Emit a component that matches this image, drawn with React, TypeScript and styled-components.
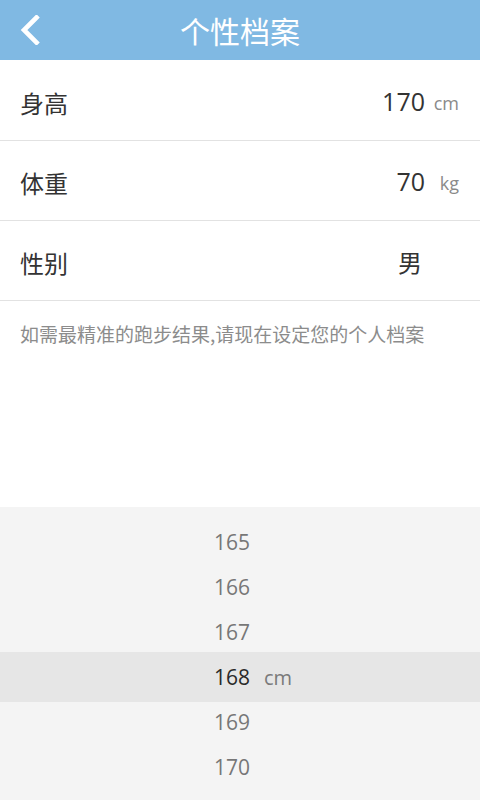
import React from "react";
import styled, { createGlobalStyle } from "styled-components";

const GlobalStyle = createGlobalStyle`
  html, body { margin: 0; padding: 0; background: #ffffff; }
  body { font-family: "Open Sans", "Noto Sans CJK SC", sans-serif; }
  * { box-sizing: border-box; }
`;

const CJK = `"Noto Sans CJK SC", "Open Sans", sans-serif`;
const LATIN = `"Open Sans", "Noto Sans CJK SC", sans-serif`;

const Page = styled.div`
  width: 480px;
  height: 800px;
  display: flex;
  flex-direction: column;
  background: #ffffff;
  overflow: hidden;
`;

const Header = styled.header`
  height: 60px;
  flex-shrink: 0;
  background: #80b9e3;
  display: grid;
  grid-template-columns: 60px 1fr 60px;
  align-items: center;
`;

const BackButton = styled.button`
  width: 60px;
  height: 60px;
  border: 0;
  padding: 0 0 0 20px;
  background: transparent;
  display: flex;
  align-items: center;
  justify-content: flex-start;
  svg { display: block; }
`;

const Title = styled.h1`
  margin: 0;
  text-align: center;
  color: #ffffff;
  font-family: ${CJK};
  font-weight: 400;
  font-size: 30px;
  line-height: 60px;
`;

const List = styled.div`
  padding-top: 1px;
`;

const Row = styled.div`
  height: 80px;
  padding: 0 21px 0 20px;
  border-bottom: 1px solid #e2e2e2;
  display: grid;
  grid-template-columns: 1fr auto 34px;
  align-items: center;
`;

const Label = styled.span`
  font-family: ${CJK};
  font-size: 24px;
  color: #333333;
  padding-top: 4px;
`;

const Value = styled.span<{ $cjk?: boolean }>`
  font-family: ${(p) => (p.$cjk ? CJK : LATIN)};
  font-size: ${(p) => (p.$cjk ? "24px" : "25px")};
  color: #333333;
  text-align: right;
  padding-right: ${(p) => (p.$cjk ? "3px" : "0")};
  padding-top: ${(p) => (p.$cjk ? "2px" : "0")};
`;

const Unit = styled.span`
  font-family: ${LATIN};
  font-size: 18px;
  color: #8a8a8a;
  text-align: right;
  padding-top: 4px;
`;

const Hint = styled.p`
  margin: 0;
  padding: 20px 20px 0;
  font-family: ${CJK};
  font-size: 19px;
  line-height: 26px;
  color: #8c8c8c;
`;

const Picker = styled.div`
  margin-top: auto;
  height: 293px;
  flex-shrink: 0;
  background: #f4f4f4;
  padding-top: 12px;
`;

const PickerRow = styled.div<{ $selected?: boolean }>`
  height: ${(p) => (p.$selected ? "50px" : "45px")};
  margin: ${(p) => (p.$selected ? "-2.5px 0" : "0")};
  background: ${(p) => (p.$selected ? "#e6e6e6" : "transparent")};
  display: flex;
  align-items: center;
  padding-left: 214px;
  gap: 14px;
`;

const PickerNumber = styled.span<{ $selected?: boolean }>`
  font-family: ${LATIN};
  font-size: 21px;
  color: ${(p) => (p.$selected ? "#2a2a2a" : "#777777")};
`;

const PickerUnit = styled.span`
  font-family: ${LATIN};
  font-size: 20px;
  color: #7a7a7a;
  padding-top: 2px;
`;

const rows = [
  { label: "身高", value: "170", unit: "cm" },
  { label: "体重", value: "70", unit: "kg" },
  { label: "性别", value: "男", unit: "", cjk: true },
];

const pickerValues = [165, 166, 167, 168, 169, 170];
const selected = 168;

export default function App() {
  return (
    <>
      <GlobalStyle />
      <Page>
        <Header>
          <BackButton aria-label="返回">
            <svg width="20" height="30" viewBox="0 0 20 30">
              <polyline
                points="16.5,2.5 4,15 16.5,27.5"
                fill="none"
                stroke="#ffffff"
                strokeWidth="4.6"
                strokeLinecap="square"
                strokeLinejoin="miter"
              />
            </svg>
          </BackButton>
          <Title>个性档案</Title>
          <span />
        </Header>
        <List>
          {rows.map((r) => (
            <Row key={r.label}>
              <Label>{r.label}</Label>
              <Value $cjk={r.cjk}>{r.value}</Value>
              <Unit>{r.unit}</Unit>
            </Row>
          ))}
        </List>
        <Hint>如需最精准的跑步结果,请现在设定您的个人档案</Hint>
        <Picker>
          {pickerValues.map((v) => (
            <PickerRow key={v} $selected={v === selected}>
              <PickerNumber $selected={v === selected}>{v}</PickerNumber>
              {v === selected && <PickerUnit>cm</PickerUnit>}
            </PickerRow>
          ))}
        </Picker>
      </Page>
    </>
  );
}
